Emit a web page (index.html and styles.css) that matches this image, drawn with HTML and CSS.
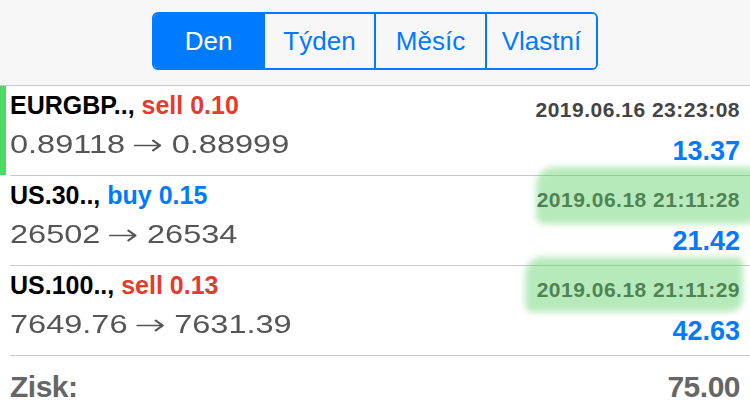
FILE: index.html
```html
<!DOCTYPE html>
<html lang="cs">
<head>
<meta charset="utf-8">
<title>Historie</title>
<link rel="stylesheet" href="styles.css">
</head>
<body>
<div class="page">
  <header class="header">
    <div class="seg">
      <div class="seg-item active">Den</div>
      <div class="seg-item">Týden</div>
      <div class="seg-item">Měsíc</div>
      <div class="seg-item">Vlastní</div>
    </div>
  </header>

  <div class="trade">
    <div class="marker on"></div>
    <div class="trade-body">
      <div class="col-left">
        <div class="title">EURGBP.., <span class="sell">sell 0.10</span></div>
        <div class="price"><span class="wide">0.89118 <svg class="arrow" viewBox="0 0 22 18"><path d="M1 9.5H20.5M15 4.5L20.5 9.5L15 14.5"/></svg> 0.88999</span></div>
      </div>
      <div class="col-right">
        <div class="time">2019.06.16 23:23:08</div>
        <div class="value">13.37</div>
      </div>
    </div>
  </div>

  <div class="trade">
    <div class="marker"></div>
    <div class="trade-body">
      <div class="col-left">
        <div class="title">US.30.., <span class="buy">buy 0.15</span></div>
        <div class="price"><span class="wide">26502 <svg class="arrow" viewBox="0 0 22 18"><path d="M1 9.5H20.5M15 4.5L20.5 9.5L15 14.5"/></svg> 26534</span></div>
      </div>
      <div class="col-right">
        <div class="time">2019.06.18 21:11:28</div>
        <div class="value">21.42</div>
      </div>
    </div>
  </div>

  <div class="trade">
    <div class="marker"></div>
    <div class="trade-body">
      <div class="col-left">
        <div class="title">US.100.., <span class="sell">sell 0.13</span></div>
        <div class="price"><span class="wide">7649.76 <svg class="arrow" viewBox="0 0 22 18"><path d="M1 9.5H20.5M15 4.5L20.5 9.5L15 14.5"/></svg> 7631.39</span></div>
      </div>
      <div class="col-right">
        <div class="time">2019.06.18 21:11:29</div>
        <div class="value">42.63</div>
      </div>
    </div>
  </div>

  <div class="total">
    <div class="total-label">Zisk:</div>
    <div class="total-value">75.00</div>
  </div>

  <div class="hl hl-a"></div>
  <div class="hl hl-b"></div>
</div>
</body>
</html>
```

FILE: styles.css
```css
* { box-sizing: border-box; }

html, body {
  margin: 0;
  padding: 0;
  background: #ffffff;
}

body {
  font-family: "Liberation Sans", Arial, sans-serif;
  width: 750px;
  height: 416px;
  overflow: hidden;
}

.page {
  position: relative;
  width: 750px;
  height: 416px;
}

.header {
  height: 86px;
  background: #f7f7f7;
  border-bottom: 1px solid #c8c7cc;
  display: flex;
  justify-content: center;
  padding-top: 12px;
}

.seg {
  display: flex;
  width: 446px;
  height: 58px;
  border: 2px solid #007aff;
  border-radius: 6px;
  overflow: hidden;
}

.seg-item {
  flex: 1;
  display: flex;
  align-items: center;
  justify-content: center;
  font-size: 26px;
  color: #007aff;
  background: #f7f7f7;
  border-left: 2px solid #007aff;
}

.seg-item:first-child { border-left: none; }

.seg-item.active {
  background: #007aff;
  color: #ffffff;
}

.trade {
  display: flex;
  height: 90px;
}

.marker {
  width: 6px;
  margin-right: 4px;
  margin-bottom: 1px;
}

.marker.on { background: #4cd964; }

.trade-body {
  flex: 1;
  display: flex;
  justify-content: space-between;
  border-bottom: 1px solid #c8c7cc;
  padding-right: 10px;
}

.col-left { padding-top: 4px; }

.title {
  font-weight: bold;
  font-size: 25px;
  line-height: 30px;
  color: #000;
}

.sell { color: #e63a2c; }
.buy { color: #007aff; }

.price {
  margin-top: 9px;
  font-size: 25px;
  line-height: 30px;
  color: #555555;
}

.wide {
  display: inline-block;
  transform: scaleX(1.3);
  transform-origin: left center;
}

.arrow {
  width: 22px;
  height: 18px;
  vertical-align: -1px;
  fill: none;
  stroke: #555555;
  stroke-width: 1.7;
  stroke-linecap: round;
  stroke-linejoin: round;
}

.col-right {
  padding-top: 11px;
  display: flex;
  flex-direction: column;
  align-items: flex-end;
}

.time {
  font-weight: bold;
  font-size: 21px;
  line-height: 26px;
  color: #444444;
  letter-spacing: 0.5px;
}

.value {
  margin-top: 13px;
  font-weight: bold;
  font-size: 27px;
  line-height: 31px;
  color: #007aff;
}

.total {
  display: flex;
  justify-content: space-between;
  padding: 13px 10px 0 10px;
  font-weight: bold;
  font-size: 30px;
  line-height: 36px;
  color: #666666;
  letter-spacing: -0.5px;
}

.hl {
  position: absolute;
  background: rgba(95, 208, 105, 0.45);
  filter: blur(3px);
  border-radius: 18px 6px 14px 8px;
}

.hl-a {
  left: 536px;
  top: 167px;
  width: 222px;
  height: 57px;
}

.hl-b {
  left: 525px;
  top: 257px;
  width: 218px;
  height: 55px;
}
```
